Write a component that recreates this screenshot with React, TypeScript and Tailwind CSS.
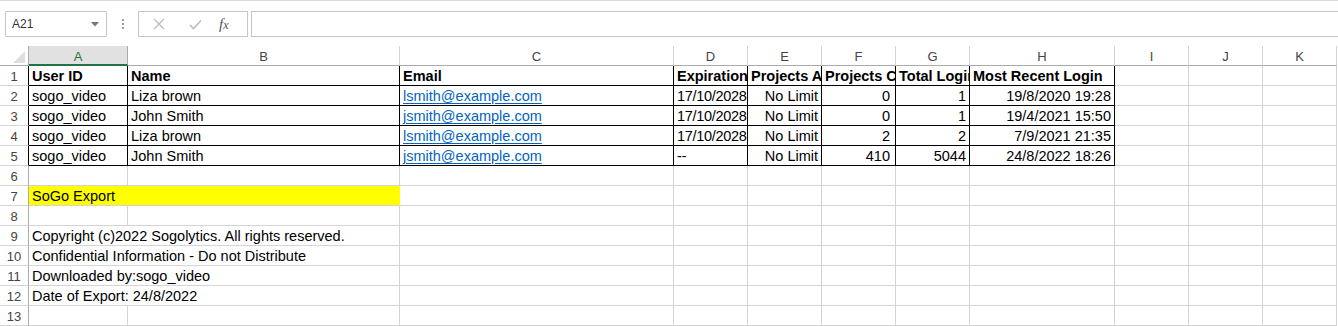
import React from "react";

const widths = [99, 272, 274, 74, 74, 74, 74, 145, 74, 74, 74];
const wClass = [
  "w-[99px]",
  "w-[272px]",
  "w-[274px]",
  "w-[74px]",
  "w-[74px]",
  "w-[74px]",
  "w-[74px]",
  "w-[145px]",
  "w-[74px]",
  "w-[74px]",
  "w-[74px]",
];
const letters = ["A", "B", "C", "D", "E", "F", "G", "H", "I", "J", "K"];

type CellDef = { t: string; right?: boolean; link?: boolean; pr?: string; tight?: boolean };

const header: CellDef[] = [
  { t: "User ID" },
  { t: "Name" },
  { t: "Email" },
  { t: "Expiration Date" },
  { t: "Projects Allowed" },
  { t: "Projects Created" },
  { t: "Total Logins" },
  { t: "Most Recent Login" },
];

const body: CellDef[][] = [
  [
    { t: "sogo_video" },
    { t: "Liza brown" },
    { t: "lsmith@example.com", link: true },
    { t: "17/10/2028", tight: true },
    { t: "No Limit", right: true },
    { t: "0", right: true, pr: "pr-[5px]" },
    { t: "1", right: true },
    { t: "19/8/2020 19:28", right: true },
  ],
  [
    { t: "sogo_video" },
    { t: "John Smith" },
    { t: "jsmith@example.com", link: true },
    { t: "17/10/2028", tight: true },
    { t: "No Limit", right: true },
    { t: "0", right: true, pr: "pr-[5px]" },
    { t: "1", right: true },
    { t: "19/4/2021 15:50", right: true },
  ],
  [
    { t: "sogo_video" },
    { t: "Liza brown" },
    { t: "lsmith@example.com", link: true },
    { t: "17/10/2028", tight: true },
    { t: "No Limit", right: true },
    { t: "2", right: true, pr: "pr-[5px]" },
    { t: "2", right: true },
    { t: "7/9/2021 21:35", right: true },
  ],
  [
    { t: "sogo_video" },
    { t: "John Smith" },
    { t: "jsmith@example.com", link: true },
    { t: "--" },
    { t: "No Limit", right: true },
    { t: "410", right: true, pr: "pr-[5px]" },
    { t: "5044", right: true },
    { t: "24/8/2022 18:26", right: true },
  ],
];

function RowHead({ n, dark }: { n: number; dark?: boolean }) {
  return (
    <div
      className={`w-[29px] h-full shrink-0 border-r ${
        dark ? "border-black" : "border-[#ababab]"
      } border-b border-b-[#d4d4d4] flex items-center justify-center pt-[2px] text-[13px] text-[#444] font-['Liberation_Sans',sans-serif]`}
    >
      {n}
    </div>
  );
}

function EmptyCells({ from }: { from: number }) {
  return (
    <>
      {widths.slice(from).map((_, i) => (
        <div
          key={i}
          className={`${wClass[from + i]} h-full shrink-0 border-r border-b border-[#d4d4d4]`}
        />
      ))}
    </>
  );
}

function TableRow({ n, cells, bold }: { n: number; cells: CellDef[]; bold?: boolean }) {
  return (
    <div className="flex h-[20px]">
      <RowHead n={n} dark />
      {cells.map((c, i) => (
        <div
          key={i}
          className={`${wClass[i]} h-full shrink-0 border-r border-b border-black overflow-hidden whitespace-nowrap leading-[21px] ${
            c.right ? `text-right ${c.pr ?? "pr-[3px]"}` : "pl-[3px]"
          } ${bold ? "font-bold" : ""} ${c.tight ? "tracking-[-0.3px]" : ""} ${
            c.link ? "text-[#0563c1] underline underline-offset-[2px]" : "text-black"
          }`}
        >
          {c.t}
        </div>
      ))}
      <EmptyCells from={8} />
    </div>
  );
}

function PlainRow({ n, text, yellow }: { n: number; text?: string; yellow?: boolean }) {
  return (
    <div className="flex h-[20px]">
      <RowHead n={n} />
      {text !== undefined || yellow ? (
        <div
          className={`w-[371px] h-full shrink-0 border-r border-b ${
            yellow ? "bg-[#ffff00] border-r-[#ffff00] border-b-[#d4d4d4]" : "border-[#d4d4d4]"
          } whitespace-nowrap pl-[3px] leading-[21px] text-black`}
        >
          {text}
        </div>
      ) : (
        <>
          <div className="w-[99px] h-full shrink-0 border-r border-b border-[#d4d4d4]" />
          <div className="w-[272px] h-full shrink-0 border-r border-b border-[#d4d4d4]" />
        </>
      )}
      <EmptyCells from={2} />
    </div>
  );
}

export default function App() {
  return (
    <div className="w-[1338px] h-[326px] bg-white overflow-hidden font-['Liberation_Sans',Arial,sans-serif] text-[14.5px]">
      {/* formula bar */}
      <div className="h-[46px] border-t border-[#dadada] flex items-start pt-[10px]">
        <div className="ml-[5px] w-[102px] h-[26px] border border-[#c6c6c6] flex items-center justify-between pl-[6px] pr-[7px] text-[12px] text-[#333]">
          <span>A21</span>
          <svg width="8" height="5" viewBox="0 0 8 5">
            <path d="M0 0 L8 0 L4 4.5 Z" fill="#777" />
          </svg>
        </div>
        <div className="w-[31px] h-[26px] flex items-center justify-center">
          <svg width="3" height="11" viewBox="0 0 3 11">
            <rect x="1" y="0" width="2" height="2" fill="#9a9a9a" />
            <rect x="1" y="4" width="2" height="2" fill="#9a9a9a" />
            <rect x="1" y="8" width="2" height="2" fill="#9a9a9a" />
          </svg>
        </div>
        <div className="w-[110px] h-[26px] border border-[#c6c6c6] flex items-center">
          <svg width="12" height="12" viewBox="0 0 12 12" className="ml-[14px]">
            <path d="M1 1 L11 11 M11 1 L1 11" stroke="#bcbcbc" strokeWidth="1.2" />
          </svg>
          <svg width="13" height="11" viewBox="0 0 13 11" className="ml-[24px]">
            <path d="M1 6 L4.5 9.5 L12 1.5" stroke="#bcbcbc" strokeWidth="1.6" fill="none" />
          </svg>
          <span className="ml-[17px] font-['Liberation_Serif',serif] italic text-[15px] text-[#555] leading-none">
            f<span className="text-[12px]">x</span>
          </span>
        </div>
        <div className="ml-[3px] flex-1 h-[26px] border-l border-t border-b border-[#c6c6c6]" />
      </div>

      {/* column header */}
      <div className="flex h-[20px]">
        <div className="w-[29px] h-full shrink-0 border-r border-b border-[#ababab] relative">
          <svg width="12" height="12" viewBox="0 0 12 12" className="absolute right-[3px] bottom-[2px]">
            <path d="M12 0 L12 12 L0 12 Z" fill="#dfdfdf" />
          </svg>
        </div>
        {letters.map((l, i) =>
          i === 0 ? (
            <div
              key={l}
              className="w-[99px] h-full shrink-0 bg-[#e1e1e1] border-r border-[#ababab] border-b-2 border-b-[#217346] flex items-center justify-center text-[13px] text-[#217346] font-['Liberation_Sans',sans-serif] pt-[3px]"
            >
              {l}
            </div>
          ) : (
            <div
              key={l}
              className={`${wClass[i]} h-full shrink-0 border-r border-r-[#d4d4d4] border-b border-b-[#ababab] flex items-center justify-center text-[13px] text-[#444] pt-[3px]`}
            >
              {l}
            </div>
          )
        )}
      </div>

      <TableRow n={1} cells={header} bold />
      {body.map((r, i) => (
        <TableRow key={i} n={i + 2} cells={r} />
      ))}
      <PlainRow n={6} />
      <PlainRow n={7} text="SoGo Export" yellow />
      <PlainRow n={8} />
      <PlainRow n={9} text="Copyright (c)2022 Sogolytics. All rights reserved." />
      <PlainRow n={10} text="Confidential Information - Do not Distribute" />
      <PlainRow n={11} text="Downloaded by:sogo_video" />
      <PlainRow n={12} text="Date of Export: 24/8/2022" />
      <PlainRow n={13} />
    </div>
  );
}
